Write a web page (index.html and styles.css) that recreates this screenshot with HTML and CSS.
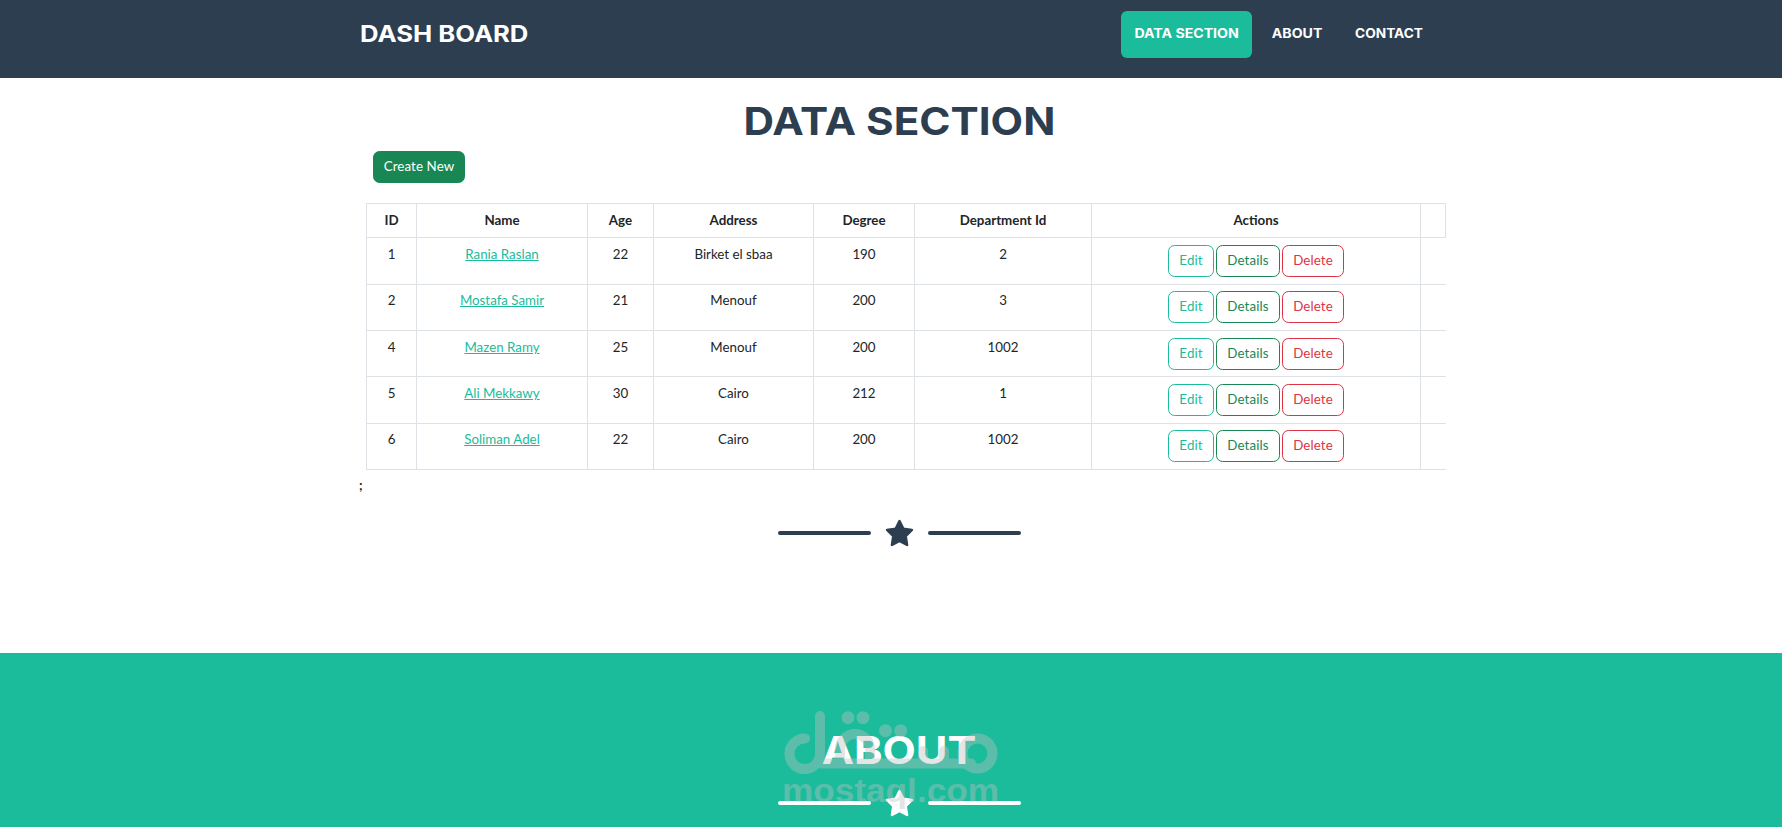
FILE: index.html
```html
<!DOCTYPE html>
<html lang="en">
<head>
  <meta charset="UTF-8" />
  <meta name="viewport" content="width=device-width, initial-scale=1.0" />
  <title>Dash Board</title>
  <link rel="stylesheet" href="styles.css">
</head>
<body>
  <nav class="navbar">
    <div class="nav-container">
      <a class="brand" href="#"><span class="wide">Dash Board</span></a>
      <ul class="nav-links">
        <li><a class="nav-link link-data active" href="#data"><span class="wide">Data Section</span></a></li>
        <li><a class="nav-link link-about" href="#about"><span class="wide">About</span></a></li>
        <li><a class="nav-link link-contact" href="#contact"><span class="wide">Contact</span></a></li>
      </ul>
    </div>
  </nav>

  <section class="data-section" id="data">
    <div class="container">
      <h2 class="heading"><span class="wide">Data Section</span></h2>
      <a class="btn btn-create" href="#">Create New</a>
      <table class="table">
        <colgroup>
          <col class="c-id"><col class="c-name"><col class="c-age"><col class="c-address">
          <col class="c-degree"><col class="c-dept"><col class="c-actions"><col class="c-empty">
        </colgroup>
        <thead>
          <tr><th>ID</th><th>Name</th><th>Age</th><th>Address</th><th>Degree</th><th>Department Id</th><th>Actions</th><th></th></tr>
        </thead>
        <tbody id="rows"></tbody>
      </table>
      <div class="stray">;</div>
      <div class="divider">
        <div class="divider-line"></div>
        <svg class="star" viewBox="0 0 28 27"><path d="M14 2 L17.6 9.3 L26 10.5 L20 16.5 L21.3 25 L14 21.1 L6.7 25 L8 16.5 L2 10.5 L10.4 9.3 Z"/></svg>
        <div class="divider-line"></div>
      </div>
    </div>
  </section>

  <section class="about-section" id="about">
    <div class="container">
      <h2 class="heading"><span class="wide">About</span></h2>
      <div class="divider">
        <div class="divider-line"></div>
        <svg class="star" viewBox="0 0 28 27"><path d="M14 2 L17.6 9.3 L26 10.5 L20 16.5 L21.3 25 L14 21.1 L6.7 25 L8 16.5 L2 10.5 L10.4 9.3 Z"/></svg>
        <div class="divider-line"></div>
      </div>
    </div>
    <svg class="watermark" viewBox="0 0 220 100" role="img" aria-label="mostaql">
      <g class="mark">
        <path d="M24 27.5 A15.3 15.3 0 1 0 39 43 V5"/>
        <path d="M40 52.5 H190"/>
        <circle cx="196.5" cy="42.5" r="15"/>
        <path d="M59 52 V38 A15 15 0 0 1 89 38 V52"/>
        <path d="M142 52 V40 M163 52 V40"/>
      </g>
      <g class="dots">
        <circle cx="67" cy="6.7" r="6.5"/><circle cx="82" cy="6.7" r="6.5"/>
        <circle cx="104.5" cy="19.7" r="6.5"/><circle cx="119.7" cy="19.7" r="6.5"/>
      </g>
      <text x="1" y="91" textLength="217" lengthAdjust="spacingAndGlyphs">mostaql.com</text>
    </svg>
  </section>

  <script>
    const students = [
      [1, "Rania Raslan", 22, "Birket el sbaa", 190, 2],
      [2, "Mostafa Samir", 21, "Menouf", 200, 3],
      [4, "Mazen Ramy", 25, "Menouf", 200, 1002],
      [5, "Ali Mekkawy", 30, "Cairo", 212, 1],
      [6, "Soliman Adel", 22, "Cairo", 200, 1002]
    ];

    document.getElementById("rows").innerHTML = students.map(([id, name, age, address, degree, dept]) => `
      <tr>
        <td>${id}</td>
        <td><a href="#">${name}</a></td>
        <td>${age}</td>
        <td>${address}</td>
        <td>${degree}</td>
        <td>${dept}</td>
        <td><div class="actions">
          <a class="btn btn-edit" href="#">Edit</a>
          <a class="btn btn-details" href="#">Details</a>
          <a class="btn btn-delete" href="#">Delete</a>
        </div></td>
        <td class="empty"></td>
      </tr>`).join("");
  </script>
</body>
</html>
```
FILE: styles.css
```css
* {
  box-sizing: border-box;
}
body {
  margin: 0;
  height: 827px;
  overflow: hidden;
  font-family: Lato, sans-serif;
  font-size: 13.33px;
  line-height: 20px;
  color: #212529;
  background: #fff;
}
.navbar {
  height: 78px;
  background: #2c3e50;
}
.nav-container {
  width: 1076px;
  margin-left: 360px;
  display: flex;
  justify-content: space-between;
}
.brand, .nav-link, .heading {
  font-family: Inter, sans-serif;
  font-weight: 700;
  text-transform: uppercase;
  text-decoration: none;
  white-space: nowrap;
}
.wide {
  display: inline-block;
  transform: scaleX(1.095);
}
.brand {
  padding-top: 17px;
  font-size: 22.8px;
  line-height: 34px;
  color: #fff;
}
.brand .wide {
  transform: scaleX(1.125);
  transform-origin: left;
}
.nav-links {
  display: flex;
  gap: 7px;
  margin: 0;
  padding: 11px 0 0;
  list-style: none;
}
.nav-link {
  display: flex;
  justify-content: center;
  height: 47px;
  padding-top: 13px;
  border-radius: 6px;
  font-size: 12.9px;
  color: #fff;
}
.link-data { width: 131px; }
.link-about { width: 76px; }
.link-contact { width: 94px; }
.nav-link.active {
  background: #1abc9c;
}
.link-contact .wide {
  transform: scaleX(1.06);
}
.data-section {
  height: 575px;
  padding-top: 19px;
}
.container {
  width: 1078px;
  margin-left: 360px;
}
.heading {
  margin: 0;
  text-align: center;
  font-size: 38.6px;
  line-height: 48px;
}
.data-section .heading {
  color: #2c3e50;
}
.btn {
  display: inline-block;
  height: 32px;
  padding: 4px 0;
  border: 1px solid;
  border-radius: 6.5px;
  text-align: center;
  text-decoration: none;
  letter-spacing: 0.1px;
}
.btn-create {
  display: block;
  width: 92px;
  margin: 6px 0 20px 13px;
  border-color: #198754;
  background: #198754;
  color: #fff;
}
.table {
  width: 1080px;
  margin-left: 6px;
  table-layout: fixed;
  border-collapse: collapse;
  text-align: center;
}
.c-id { width: 50px; }
.c-name { width: 171px; }
.c-age { width: 66px; }
.c-address { width: 160px; }
.c-degree { width: 101px; }
.c-dept { width: 177px; }
.c-actions { width: 329px; }
.c-empty { width: 25px; }
.table th, .table td {
  padding: 5.67px 6.67px 7.67px;
  border: 1px solid #dee2e6;
  vertical-align: top;
}
.table td.empty {
  border-right: 0;
}
.table td a:not(.btn) {
  color: #1abc9c;
}
.actions {
  display: flex;
  justify-content: center;
  gap: 2px;
  padding-top: 1px;
  margin-bottom: -1px;
}
.btn-edit {
  width: 46px;
  color: #1abc9c;
}
.btn-details {
  width: 64px;
  color: #198754;
}
.btn-delete {
  width: 62px;
  color: #dc3545;
}
.stray {
  margin-top: 5px;
  margin-left: -1px;
  font-weight: 700;
}
.divider {
  display: flex;
  align-items: center;
  justify-content: center;
  gap: 14px;
  height: 30px;
}
.data-section .divider {
  margin-top: 23px;
}
.divider-line {
  width: 93px;
  height: 4px;
  border-radius: 4px;
  background: #2c3e50;
}
.star {
  width: 29px;
  height: 28px;
  fill: #2c3e50;
  stroke: #2c3e50;
  stroke-width: 2.4;
  stroke-linejoin: round;
}
.about-section {
  position: relative;
  height: 174px;
  padding-top: 73px;
  background: #1abc9c;
  color: #fff;
}
.about-section .heading .wide {
  transform: scaleX(1.12);
}
.about-section .divider {
  margin-top: 14px;
}
.about-section .divider-line {
  background: #fff;
}
.about-section .star {
  fill: #fff;
  stroke: #fff;
}
/* logo laid over the section */
.watermark {
  position: absolute;
  left: 781px;
  top: 58px;
  width: 220px;
  height: 100px;
  opacity: 0.4;
  fill: #c0c0c0;
}
.mark {
  fill: none;
  stroke: #c0c0c0;
  stroke-width: 10;
  stroke-linecap: round;
}
.watermark text {
  font-family: "Liberation Sans", sans-serif;
  font-size: 34px;
  font-weight: 700;
}
```
